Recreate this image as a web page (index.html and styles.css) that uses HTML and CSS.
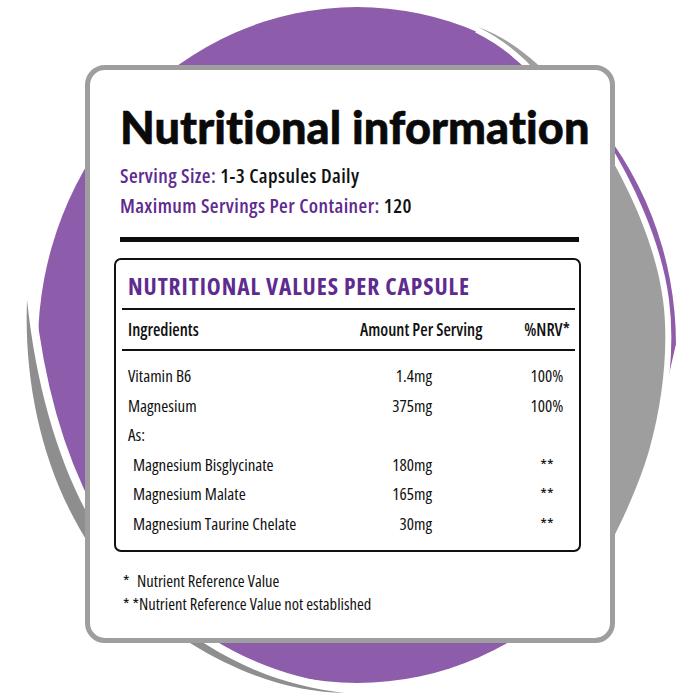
FILE: index.html
```html
<!DOCTYPE html>
<html lang="en">
<head>
<meta charset="utf-8">
<title>Nutritional information</title>
<link rel="stylesheet" href="styles.css">
</head>
<body>
<svg class="backdrop" viewBox="0 0 700 700" width="700" height="700" aria-hidden="true">
  <defs>
    <clipPath id="purpleClip">
      <path d="M0,0H700V318H682L670,370L657,430L635,490L600,560L560,640V700H0Z"/>
    </clipPath>
  </defs>
  <ellipse cx="357" cy="345" rx="319" ry="338" fill="#8d5caa" clip-path="url(#purpleClip)"/>
  <path d="M27,300 C22,430 70,570 190,643 C250,680 300,692 345,693 C300,688 255,675 207,645 C110,585 45,470 27,300Z" fill="#8e8e8e" stroke="#fff" stroke-width="16" paint-order="stroke"/>
  <path d="M478,27 C530,45 575,100 600,140 C625,180 655,240 663,300 C669,345 663,400 650,447 C641,480 620,530 590,580 C600,450 605,300 590,200 C585,130 545,60 478,27Z" fill="#9e9e9e" stroke="#fff" stroke-width="12" paint-order="stroke"/>
</svg>

<main class="card">
  <header class="head">
    <h1 class="title">Nutritional information</h1>
    <p class="meta"><span class="lbl">Serving Size:</span> 1-3 Capsules Daily</p>
    <p class="meta"><span class="lbl">Maximum Servings Per Container:</span> 120</p>
    <div class="rule"></div>
  </header>

  <section class="panel">
    <h2 class="panel-title">NUTRITIONAL VALUES PER CAPSULE</h2>
    <div class="line"></div>
    <div class="thead">
      <span>Ingredients</span>
      <span>Amount Per Serving</span>
      <span class="thead-nrv">%NRV*</span>
    </div>
    <div class="line"></div>
    <div class="rows">
      <div class="row"><span>Vitamin B6</span><span class="amt">1.4mg</span><span class="nrv">100%</span></div>
      <div class="row"><span>Magnesium</span><span class="amt">375mg</span><span class="nrv">100%</span></div>
      <div class="row"><span>As:</span></div>
      <div class="row sub"><span>Magnesium Bisglycinate</span><span class="amt">180mg</span><span class="nrv">**</span></div>
      <div class="row sub"><span>Magnesium Malate</span><span class="amt">165mg</span><span class="nrv">**</span></div>
      <div class="row sub"><span>Magnesium Taurine Chelate</span><span class="amt">30mg</span><span class="nrv">**</span></div>
    </div>
  </section>

  <div class="notes">
    <p><span class="star">*</span>Nutrient Reference Value</p>
    <p>* *Nutrient Reference Value not established</p>
  </div>
</main>
</body>
</html>
```
FILE: styles.css
```css
html, body {
  margin: 0;
  padding: 0;
  background: #ffffff;
}

body {
  position: relative;
  width: 700px;
  height: 700px;
  overflow: hidden;
  font-family: "Open Sans", "Liberation Sans", sans-serif;
  font-stretch: 75%;
  color: #111111;
}

.backdrop {
  position: absolute;
  left: 0;
  top: 0;
  z-index: 0;
}

.card {
  position: relative;
  z-index: 1;
  box-sizing: border-box;
  width: 530px;
  height: 578px;
  margin: 65px 0 0 85px;
  padding: 35px 29px 0 24px;
  background: #ffffff;
  border: 5px solid #9e9e9e;
  border-radius: 20px;
}

.title {
  margin: 0 0 11px 6px;
  font-family: Lato, "Liberation Sans", sans-serif;
  font-stretch: normal;
  font-weight: 900;
  font-size: 45px;
  line-height: 45px;
  letter-spacing: 0.1px;
  white-space: nowrap;
  font-variant-ligatures: none;
  font-feature-settings: "liga" 0, "clig" 0;
  -webkit-text-stroke: 0.6px #0a0a0a;
  color: #0a0a0a;
}

.meta {
  margin: 0 0 0 6px;
  font-weight: 600;
  font-size: 20px;
  line-height: 30px;
  letter-spacing: 0.4px;
}

.lbl {
  color: #5e2b8f;
}

.rule {
  height: 5px;
  margin: 16px 2px 16px 6px;
  background: #0d0d0d;
}

.panel {
  box-sizing: border-box;
  height: 294px;
  padding: 9px 4px 0 6px;
  border: 2px solid #111111;
  border-radius: 7px;
}

.panel-title {
  margin: 0 0 5px 6px;
  font-weight: 700;
  font-size: 23.5px;
  line-height: 34px;
  letter-spacing: 0.9px;
  color: #5e2b8f;
}

.line {
  height: 2px;
  background: #111111;
}

.thead {
  display: grid;
  grid-template-columns: 232px 159px 1fr;
  padding-left: 6px;
  font-weight: 600;
  font-size: 17px;
  line-height: 39px;
}

.thead-nrv {
  text-align: center;
}

.rows {
  padding-top: 10px;
}

.row {
  display: grid;
  grid-template-columns: 214px 90px 1fr;
  padding-left: 6px;
  font-weight: 400;
  font-size: 17px;
  line-height: 29.5px;
}

.sub span:first-child {
  padding-left: 5px;
}

.amt {
  text-align: right;
}

.nrv {
  padding-left: 87px;
  text-align: center;
}

.notes {
  margin-top: 17px;
  padding-left: 9px;
  font-size: 16.5px;
  line-height: 23.3px;
}

.notes p {
  margin: 0;
}

.star {
  display: inline-block;
  width: 14px;
}
```
